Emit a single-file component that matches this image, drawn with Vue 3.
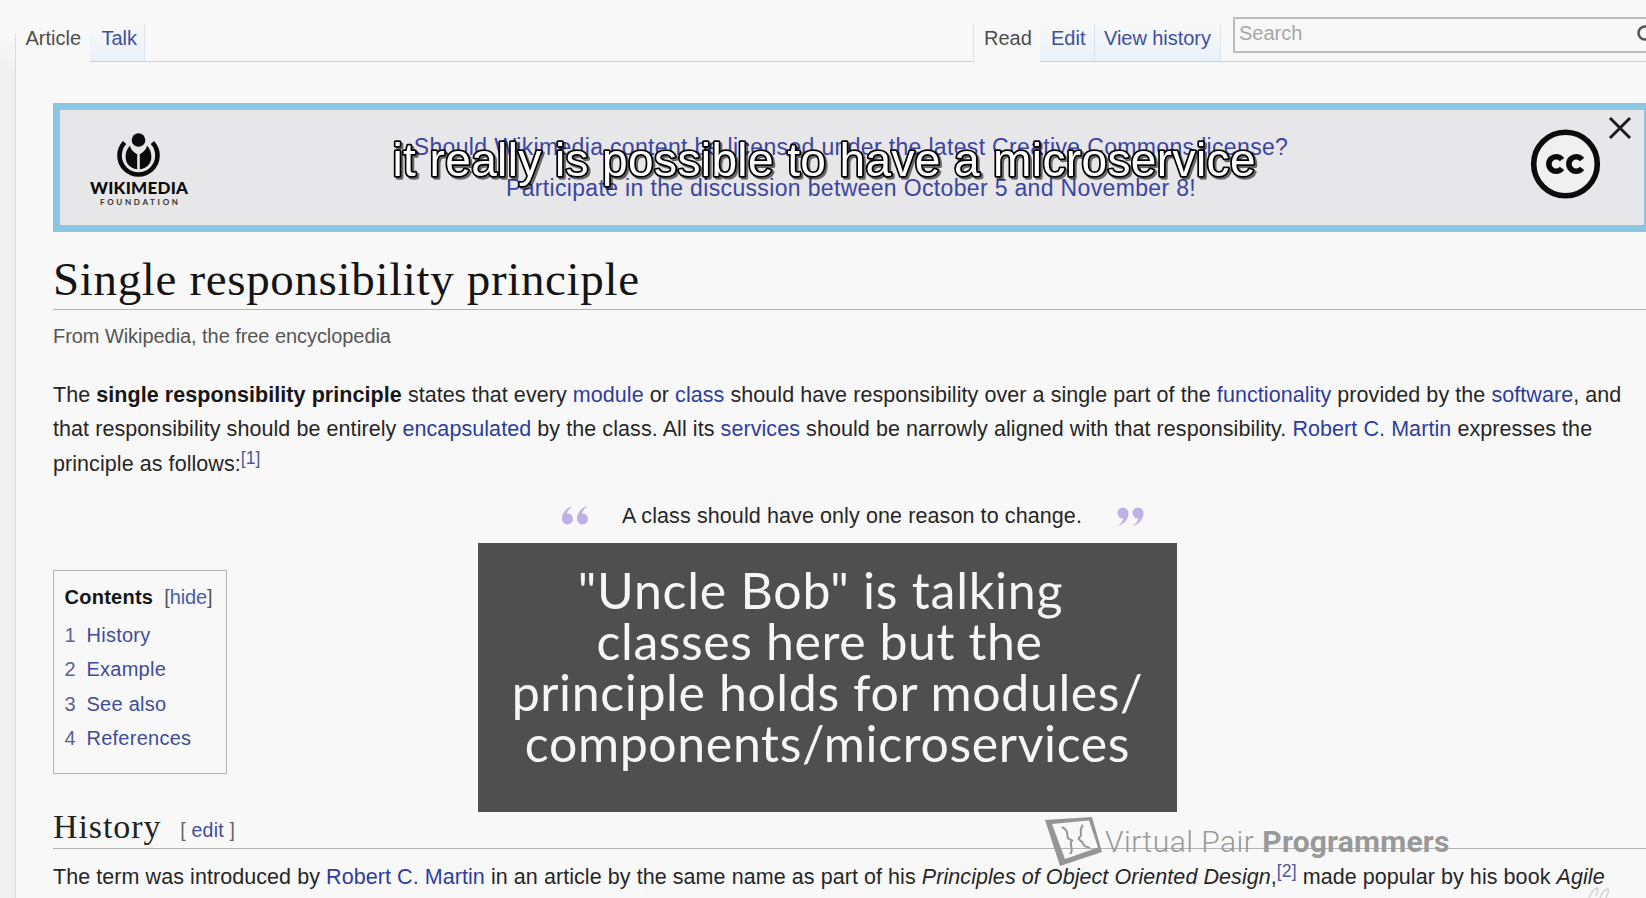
<script setup>
const contents = ['History', 'Example', 'See also', 'References']
const note = [
  { text: '"Uncle Bob" is talking', cls: 'n1' },
  { text: 'classes here but the', cls: 'n2' },
  { text: 'principle holds for modules/', cls: 'n3' },
  { text: 'components/microservices', cls: 'n4' },
]
</script>

<template>
  <div class="page">
    <div class="gutter"></div>
    <main class="main">
      <header class="header">
        <div class="tab article">Article</div>
        <div class="tab link talk">Talk</div>
        <div class="rule"></div>
        <div class="tab read">Read</div>
        <div class="tab link edit">Edit</div>
        <div class="tab link history">View history</div>
        <div class="search-wrap">
          <div class="search">
            <span>Search</span>
            <svg class="mag" width="24" height="24" viewBox="0 0 24 24">
              <circle cx="9" cy="9" r="6.5" fill="none" stroke="#555" stroke-width="2.6" />
              <path d="M14 14l7 7" stroke="#555" stroke-width="3" />
            </svg>
          </div>
        </div>
      </header>

      <section class="banner">
        <svg class="wmf" width="104" height="96" viewBox="0 0 104 96">
          <path d="M37.6 14.5A19 19 0 1 0 65.4 14.5" fill="none" stroke="#0b0b0b" stroke-width="4.6" />
          <circle cx="51.5" cy="12" r="6.8" fill="#0b0b0b" />
          <path d="M50.2 41.2C42.5 40.5 38.6 35 38.6 28.5C38.6 24.2 40.2 20.4 43 17.4C43.6 21.5 46.5 23.9 50.2 26.3Z" fill="#0b0b0b" />
          <path d="M52.8 41.2C60.5 40.5 64.4 35 64.4 28.5C64.4 24.2 62.8 20.4 60 17.4C59.4 21.5 56.5 23.9 52.8 26.3Z" fill="#0b0b0b" />
          <text x="3" y="65.5" class="wm1" textLength="98">WIKIMEDIA</text>
          <text x="13" y="77" class="wm2" textLength="78">FOUNDATION</text>
        </svg>
        <div class="banner-text">
          <div>Should Wikimedia content be licensed under the latest Creative Commons license?</div>
          <div>Participate in the discussion between October 5 and November 8!</div>
        </div>
        <svg class="cc" width="72" height="72" viewBox="0 0 72 72">
          <circle cx="35.500" cy="36" r="31.8" fill="#f1f0f1" stroke="#0b0b0b" stroke-width="5.6" />
          <path d="M32 31.600A7.300 7.300 0 1 0 32 40.400M52 31.600A7.300 7.300 0 1 0 52 40.400" fill="none" stroke="#0b0b0b" stroke-width="5.600" />
        </svg>
        <svg class="close" width="26" height="26" viewBox="0 0 26 26">
          <path d="M3 3L23 23M23 3L3 23" stroke="#1c1c1c" stroke-width="3" />
        </svg>
      </section>

      <h1>Single responsibility principle</h1>
      <div class="sub">From Wikipedia, the free encyclopedia</div>

      <div class="para">
        <div>The <b>single responsibility principle</b> states that every <a>module</a> or <a>class</a> should have responsibility over a single part of the <a>functionality</a> provided by the <a>software</a>, and</div>
        <div class="line2">that responsibility should be entirely <a>encapsulated</a> by the class. All its <a>services</a> should be narrowly aligned with that responsibility. <a>Robert C. Martin</a> expresses the</div>
        <div>principle as follows:<sup>[1]</sup></div>
      </div>

      <div class="quote">
        <svg width="28" height="22" viewBox="0 0 28 22" fill="#bdb2e3">
          <path d="M12 1C5 2.500 1 8 1 14a5.500 5.500 0 1 0 5-5.500C7 5 9 3 12 1Z" />
          <path d="M27 1C20 2.500 16 8 16 14a5.500 5.500 0 1 0 5-5.500C22 5 24 3 27 1Z" />
        </svg>
        <span class="quote-text">A class should have only one reason to change.</span>
        <svg width="29" height="22" viewBox="0 0 28 22" fill="#bdb2e3">
          <path d="M1 21C8 19.500 12 14 12 8a5.500 5.500 0 1 0-5 5.500C6 17 4 19 1 21Z" />
          <path d="M16 21C23 19.500 27 14 27 8a5.500 5.500 0 1 0-5 5.500C21 17 19 19 16 21Z" />
        </svg>
      </div>

      <nav class="toc">
        <div class="toc-title"><b>Contents</b><span class="hide">[<a>hide</a>]</span></div>
        <div v-for="(item, i) in contents" :key="item" class="toc-item">
          <span class="num">{{ i + 1 }}</span>{{ item }}
        </div>
      </nav>

      <h2>History<span class="edit-link">[ <a>edit</a> ]</span></h2>
      <div class="para second">
        <div>The term was introduced by <a>Robert C. Martin</a> in an article by the same name as part of his <i>Principles of Object Oriented Design</i>,<sup>[2]</sup> made popular by his book <i>Agile</i></div>
      </div>
    </main>

    <aside class="note">
      <div v-for="line in note" :key="line.text" :class="line.cls">{{ line.text }}</div>
    </aside>

    <div class="brand">
      <svg width="62" height="54" viewBox="0 0 62 54">
        <path fill-rule="evenodd" fill="#959595" d="M2 6L49 3L59 38L17 52ZM9 10L22 45L55 33.500L46 6.500Z" />
        <path d="M19 13C27 17 23 21 25 24C26 26 30 26 29 27C25 30 32 36 27 40M40 11C35 17 40 21 37 23C33 25 39 27 40 29C40 32 43 33 47 34" fill="none" stroke="#959595" stroke-width="2" />
      </svg>
      <span class="thin">Virtual Pair</span><span class="bold">Programmers</span>
    </div>

    <svg class="corner" width="60" height="12" viewBox="0 0 60 12" fill="none" stroke="#d2d2d2" stroke-width="1.500">
      <path d="M3 12C5 7 8 3 11 2C13 2 11 7 10 10M14 12C16 7 19 3 22 3C24 4 21 8 20 12" />
    </svg>

    <svg class="caption" width="900" height="60" viewBox="0 0 900 60">
      <text x="14.500" y="46" class="caption-text" textLength="863">it really is possible to have a microservice</text>
    </svg>
  </div>
</template>

<style>
body { background: #f8f8f8; overflow: hidden; }
</style>

<style scoped>
.page { position: relative; display: flex; width: 1646px; height: 898px; overflow: hidden; background: #f8f8f8; font-family: "Liberation Sans", Arial, sans-serif; color: #262626; white-space: nowrap; }
.gutter { flex: none; width: 15px; margin-top: 34px; border-right: 1px solid #dcdcdc; background: linear-gradient(#f8f8f8, #f0f0f0 40px); }
.main { flex: 1; min-width: 0; }
.header { display: flex; align-items: flex-end; height: 62px; font-size: 20px; }
.tab { box-sizing: border-box; flex: none; height: 38px; padding-top: 6px; line-height: 16px; color: #4d4d4d; }
.tab.link { color: #3e4f9e; border-bottom: 1px solid #cbd0d4; background: linear-gradient(#f8f8f8, #e9f2f8 36px); }
.article { width: 74px; padding-left: 9.500px; }
.talk { width: 55px; padding-left: 11.500px; border-right: 1px solid #dbe6ee; }
.rule { width: 828px; border-bottom: 1px solid #d0d0d0; }
.read { width: 67px; padding-left: 10px; border-left: 1px solid #e0e0e0; }
.edit { width: 55px; padding-left: 11px; border-right: 1px solid #d6e2ec; }
.history { width: 126px; padding-left: 9px; letter-spacing: -.05px; border-right: 1px solid #dbe6ee; }
.search-wrap { flex: 1; box-sizing: border-box; min-width: 0; height: 62px; border-bottom: 1px solid #d0d0d0; padding: 17px 0 0 12px; }
.search { display: flex; justify-content: space-between; box-sizing: border-box; width: 437px; height: 36px; padding-left: 4px; border: 2px solid #bcbcbc; line-height: 29px; color: #a6a6a6; }
.mag { margin: 5px 8px 0 0; }
.banner { position: relative; display: flex; box-sizing: border-box; width: 1598px; height: 129px; margin: 41px 0 0 37px; border: 7px solid #8bc7e2; background: #e7e6e8; }
.wmf { flex: none; margin: 18px 0 0 27px; }
.wm1 { font: 900 17px Lato, sans-serif; fill: #0b0b0b; }
.wm2 { font: 700 8px Lato, sans-serif; fill: #333; }
.banner-text { width: 874px; margin: 17px 0 0 223px; font-size: 23px; line-height: 41px; letter-spacing: .34px; text-align: center; color: #3c45a2; }
.banner-text div { margin: 0 -10px; }
.cc { flex: none; margin: 18px 0 0 242px; }
.close { position: absolute; right: 11px; top: 5px; }
h1 { margin: 19px 0 0 37px; padding-bottom: 2px; border-bottom: 1px solid #b4b4b4; font: 400 47px/56px "Liberation Serif", serif; letter-spacing: .65px; color: #141414; }
.sub { margin: 14px 0 0 37px; font-size: 20px; line-height: 24px; letter-spacing: -.06px; color: #555; }
.para { margin: 29.600px 0 0 37px; font-size: 21.500px; line-height: 34.500px; letter-spacing: .067px; }
.line2 { padding-top: 1px; line-height: 33.500px; letter-spacing: .074px; }
a, sup { color: #2d3d9f; }
b { color: #161616; }
sup { font-size: 17.500px; line-height: 0; vertical-align: 7px; letter-spacing: .1px; color: #4a5aa0; }
.quote { display: flex; align-items: center; margin: 18.400px 0 0 545px; font-size: 21.500px; line-height: 34px; letter-spacing: .1px; }
.quote-text { margin: 0 34px 0 33px; }
.toc { box-sizing: border-box; width: 174px; height: 204px; margin: 36.500px 0 0 37px; padding: 9px 0 0 10.500px; border: 1px solid #b4b4b4; font-size: 20px; letter-spacing: .25px; }
.toc-title { line-height: 34px; margin-bottom: 4px; color: #555; }
.hide { margin-left: 11px; letter-spacing: -.1px; }
.hide a { color: #4560a0; }
.toc-item { line-height: 34.300px; color: #3f4c96; }
.num { display: inline-block; width: 22px; color: #5a6390; }
h2 { margin: 33px 0 0 37px; padding-bottom: 1px; border-bottom: 1px solid #b4b4b4; font: 400 34px/40px "Liberation Serif", serif; letter-spacing: .9px; color: #222; }
.edit-link { position: relative; top: -1px; margin-left: 19px; font: 19.500px "Liberation Sans", sans-serif; letter-spacing: .2px; color: #666; }
.edit-link a { color: #414d9c; }
.second { margin-top: 11.500px; }
.note { position: absolute; left: 478px; top: 543px; box-sizing: border-box; width: 699px; height: 269px; padding-top: 21.500px; background: #4f4f4f; color: #f6f6f6; font: 50px/51.300px Lato, "Open Sans", sans-serif; text-align: center; }
.n1 { letter-spacing: .78px; padding-right: 14px; }
.n2 { letter-spacing: .58px; padding-right: 16px; }
.n3 { letter-spacing: .62px; }
.n4 { letter-spacing: .64px; }
.brand { position: absolute; left: 1043px; top: 814px; display: flex; font: 30px/40px Roboto, sans-serif; color: #999; }
.brand span { margin-top: 8px; }
.thin { font-weight: 300; letter-spacing: .48px; }
.bold { margin-left: 8px; font-weight: 700; letter-spacing: .2px; }
.corner { position: absolute; right: 0; bottom: 0; }
.caption { position: absolute; left: 378px; top: 130px; overflow: visible; }
.caption-text { font-size: 46px; fill: #fff; stroke: #000; stroke-width: 3.500px; stroke-linejoin: round; paint-order: stroke; filter: drop-shadow(2px 2px 0.500px rgba(0, 0, 0, .55)); }
</style>
